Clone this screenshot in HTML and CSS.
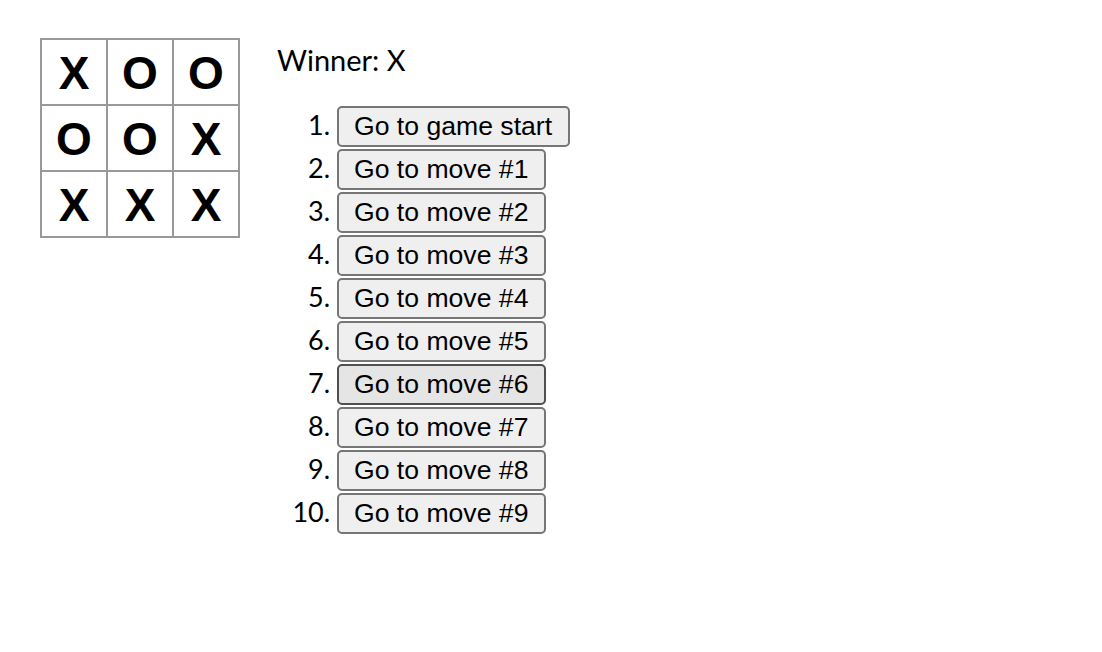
FILE: index.html
```html
<!DOCTYPE html>
<html>
<head>
  <title>Tic-Tac-Toe</title>
  <link rel="stylesheet" href="styles.css">
</head>
<body>
  <div class="game">
    <div class="game-board">
      <div class="board-row">
        <button class="square">X</button>
        <button class="square">O</button>
        <button class="square">O</button>
      </div>
      <div class="board-row">
        <button class="square">O</button>
        <button class="square">O</button>
        <button class="square">X</button>
      </div>
      <div class="board-row">
        <button class="square">X</button>
        <button class="square">X</button>
        <button class="square">X</button>
      </div>
    </div>
    <div class="game-info">
      <div class="status">Winner: X</div>
      <ol>
        <li><button class="move">Go to game start</button></li>
        <li><button class="move">Go to move #1</button></li>
        <li><button class="move">Go to move #2</button></li>
        <li><button class="move">Go to move #3</button></li>
        <li><button class="move">Go to move #4</button></li>
        <li><button class="move">Go to move #5</button></li>
        <li><button class="move hover">Go to move #6</button></li>
        <li><button class="move">Go to move #7</button></li>
        <li><button class="move">Go to move #8</button></li>
        <li><button class="move">Go to move #9</button></li>
      </ol>
    </div>
  </div>
</body>
</html>
```

FILE: styles.css
```css
body {
  font: 27px "Lato", "DejaVu Sans", sans-serif;
  margin: 38px 40px;
}

ol {
  padding-left: 60px;
  margin: 0;
}

li {
  height: 43px;
}

.board-row {
  display: flex;
}

.board-row + .board-row {
  margin-top: -2px;
}

.square {
  background: #fff;
  border: 2px solid #999;
  font-family: "Liberation Sans", Arial, sans-serif;
  font-size: 46px;
  font-weight: bold;
  line-height: 66px;
  height: 68px;
  width: 68px;
  margin-right: -2px;
  padding: 0;
  text-align: center;
  color: #000;
}

.status {
  font-size: 29px;
  margin-bottom: 24px;
  line-height: 44px;
}

.game {
  display: flex;
  flex-direction: row;
}

.game-info {
  margin-left: 39px;
}

.move {
  font-family: "Liberation Sans", Arial, sans-serif;
  font-size: 26.6px;
  padding: 3px 16px 3px 15px;
  background: #efefef;
  border: 2px solid #767676;
  border-radius: 5px;
  color: #000;
}

.move.hover {
  background: #e5e5e5;
  border-color: #4f4f4f;
}
```
